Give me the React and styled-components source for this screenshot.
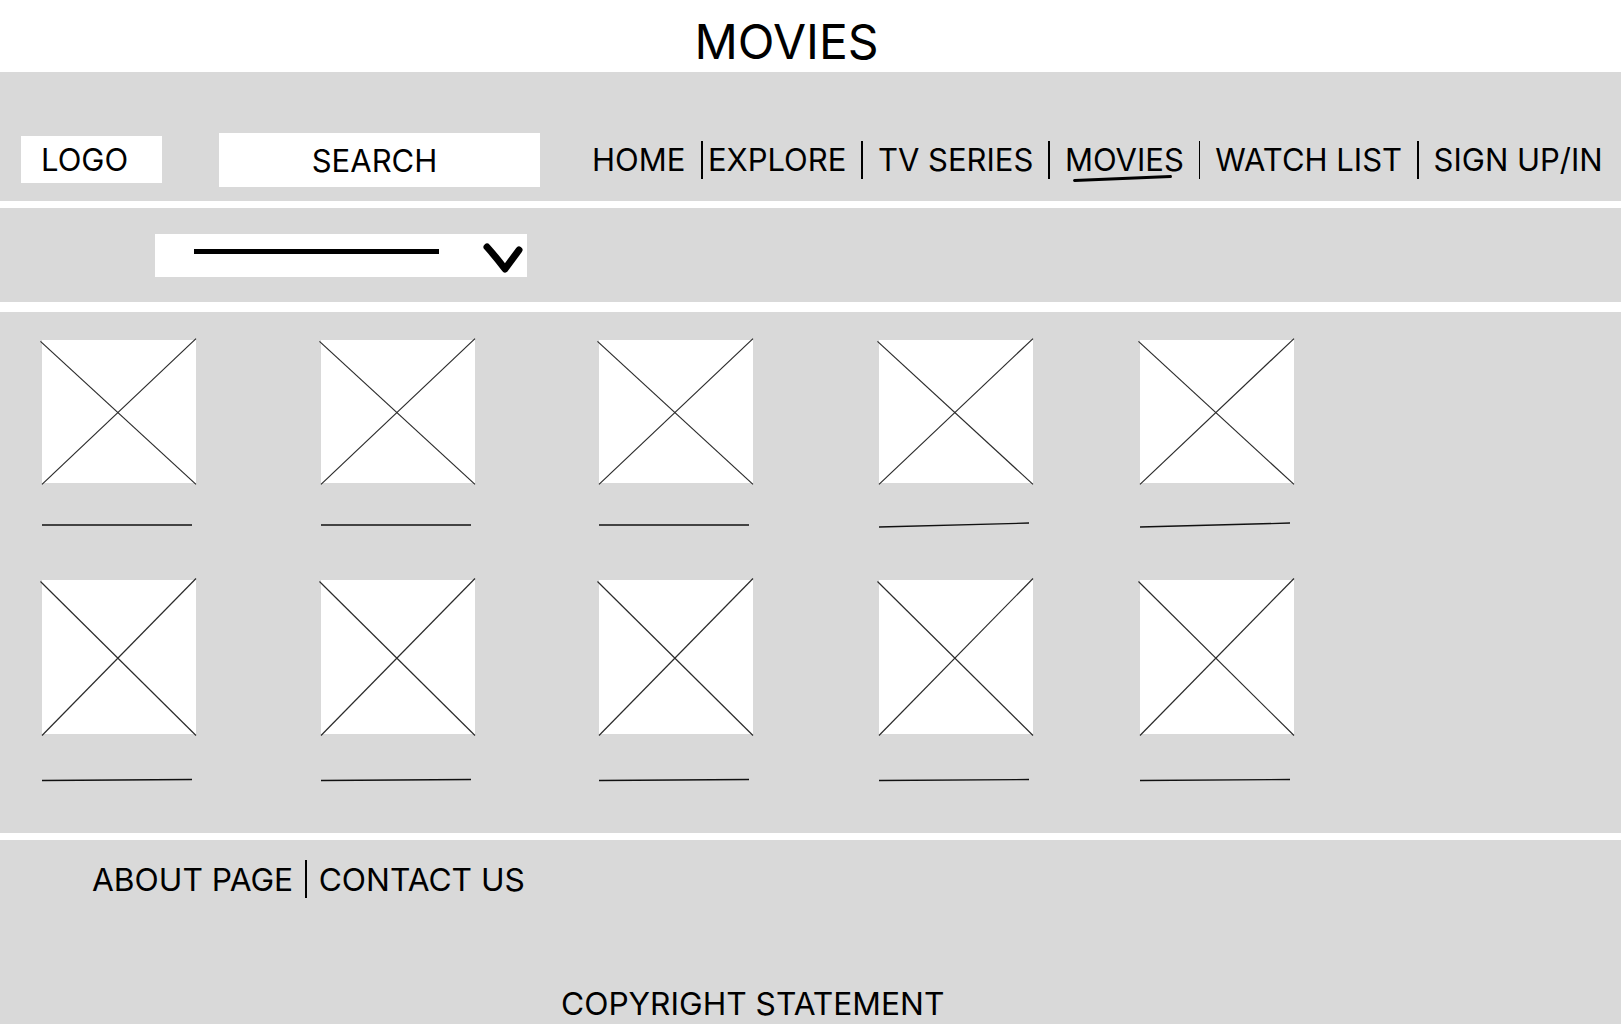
import React from 'react';
import styled, { createGlobalStyle } from 'styled-components';

const GlobalStyle = createGlobalStyle`
  * {
    box-sizing: border-box;
  }

  body {
    margin: 0;
    background: #fff;
    color: #000;
    font-family: Inter, 'Noto Sans', sans-serif;
  }
`;

const navLinks = ['HOME', 'EXPLORE', 'TV SERIES', 'MOVIES', 'WATCH LIST', 'SIGN UP/IN'];

// little tilt on the caption lines, like the hand drawn wireframe
const movies = [
  { id: 1, tilt: 0 },
  { id: 2, tilt: 0 },
  { id: 3, tilt: 0 },
  { id: 4, tilt: -4 },
  { id: 5, tilt: -4 },
  { id: 6, tilt: -1 },
  { id: 7, tilt: -1 },
  { id: 8, tilt: -1 },
  { id: 9, tilt: -1 },
  { id: 10, tilt: -1 }
];

const App = () => {
  return (
    <Page>
      <GlobalStyle />
      <TitleBar>
        <Title>MOVIES</Title>
      </TitleBar>

      <Header>
        <LogoBox>LOGO</LogoBox>
        <SearchBox>SEARCH</SearchBox>
        <Nav>
          {navLinks.map((link, i) => (
            <React.Fragment key={link}>
              {i > 0 && <Divider $tight={i === 1} />}
              <NavLink $active={link === 'MOVIES'}>{link}</NavLink>
            </React.Fragment>
          ))}
        </Nav>
      </Header>

      <FilterBar>
        <Select>
          <SelectValue />
          <Chevron viewBox="0 0 42 32" width="42" height="32">
            <path
              d="M5 5 Q14 15 23 27 L37 8"
              fill="none"
              stroke="#000"
              strokeWidth="7"
              strokeLinecap="round"
              strokeLinejoin="round"
            />
          </Chevron>
        </Select>
      </FilterBar>

      <Gallery>
        <Grid>
          {movies.map((movie, i) => (
            <Card key={movie.id}>
              <Poster $tall={i >= 5}>
                <Cross viewBox="0 0 100 100" preserveAspectRatio="none">
                  <line x1="-1" y1="1" x2="100" y2="101" vectorEffect="non-scaling-stroke" />
                  <line x1="100" y1="-1" x2="0" y2="101" vectorEffect="non-scaling-stroke" />
                </Cross>
              </Poster>
              <Caption $tall={i >= 5} viewBox="0 0 150 10" preserveAspectRatio="none">
                <line
                  x1="0"
                  y1={5 - movie.tilt / 2}
                  x2="150"
                  y2={5 + movie.tilt / 2}
                  stroke="#111"
                  strokeWidth="1.3"
                  vectorEffect="non-scaling-stroke"
                />
              </Caption>
            </Card>
          ))}
        </Grid>
      </Gallery>

      <Footer>
        <FooterLinks>
          <FooterLink>ABOUT PAGE</FooterLink>
          <Divider $gap={12} />
          <FooterLink>CONTACT US</FooterLink>
        </FooterLinks>
        <Copyright>COPYRIGHT STATEMENT</Copyright>
      </Footer>
    </Page>
  );
};

const Page = styled.div`
  display: flex;
  flex-direction: column;
  min-height: 100vh;
`;

const TitleBar = styled.div`
  height: 72px;
  padding-top: 18px;
  padding-right: 48px;
  text-align: center;
`;

const Title = styled.h1`
  margin: 0;
  font-size: 48px;
  font-weight: 400;
  line-height: 1;
`;

const Header = styled.header`
  height: 129px;
  padding: 46px 0 0 21px;
  display: flex;
  align-items: center;
  background: #d9d9d9;
  font-size: 31px;
`;

const LogoBox = styled.div`
  width: 141px;
  height: 47px;
  padding-left: 20px;
  display: flex;
  align-items: center;
  background: #fff;
`;

const SearchBox = styled.div`
  width: 321px;
  height: 54px;
  margin-left: 57px;
  padding: 2px 10px 0 0;
  display: flex;
  align-items: center;
  justify-content: center;
  background: #fff;
`;

const Nav = styled.nav`
  margin-left: 52px;
  display: flex;
  align-items: center;
  white-space: nowrap;
`;

const NavLink = styled.span`
  position: relative;
  cursor: pointer;

  ${({ $active }) => $active && `
    &::after {
      content: '';
      position: absolute;
      left: 8px;
      top: 36px;
      width: 99px;
      height: 3px;
      border-radius: 2px;
      background: #000;
      transform: rotate(-2.3deg);
    }
  `}
`;

const Divider = styled.span`
  width: 1.5px;
  height: 38px;
  margin: 0 ${({ $tight, $gap = 15 }) => ($tight ? '5px 0 16px' : `${$gap}px`)};
  background: #000;
`;

const FilterBar = styled.div`
  height: 94px;
  margin-top: 7px;
  padding-left: 155px;
  display: flex;
  align-items: center;
  background: #d9d9d9;
`;

const Select = styled.div`
  width: 372px;
  height: 43px;
  padding-left: 39px;
  display: flex;
  align-items: center;
  background: #fff;
  cursor: pointer;
`;

const SelectValue = styled.span`
  width: 245px;
  height: 5px;
  margin-top: -8px;
  background: #000;
`;

const Chevron = styled.svg`
  margin-left: 43px;
  margin-top: 6px;
`;

const Gallery = styled.section`
  height: 521px;
  margin-top: 10px;
  padding: 28px 0 0 42px;
  background: #d9d9d9;
`;

const Grid = styled.div`
  display: grid;
  grid-template-columns: 279px 278px 280px 261px 154px;
  row-gap: 50px;
`;

const Card = styled.div`
  width: 154px;
  display: flex;
  flex-direction: column;
`;

const Poster = styled.div`
  position: relative;
  height: ${({ $tall }) => ($tall ? '154px' : '143px')};
  background: #fff;
`;

const Cross = styled.svg`
  position: absolute;
  inset: 0;
  width: 100%;
  height: 100%;
  overflow: visible;

  line {
    stroke: #2b2b2b;
    stroke-width: 1.2;
  }
`;

const Caption = styled.svg`
  width: 150px;
  height: 10px;
  margin-top: ${({ $tall }) => ($tall ? '41px' : '37px')};
  overflow: visible;
`;

const Footer = styled.footer`
  flex: 1;
  height: 184px;
  margin-top: 7px;
  padding: 20px 0 0 92px;
  background: #d9d9d9;
  font-size: 31.7px;
`;

const FooterLinks = styled.div`
  display: flex;
  align-items: center;
  height: 38px;
`;

const FooterLink = styled.span`
  cursor: pointer;
`;

const Copyright = styled.div`
  margin-top: 86px;
  padding-left: 469px;
`;

export default App;
